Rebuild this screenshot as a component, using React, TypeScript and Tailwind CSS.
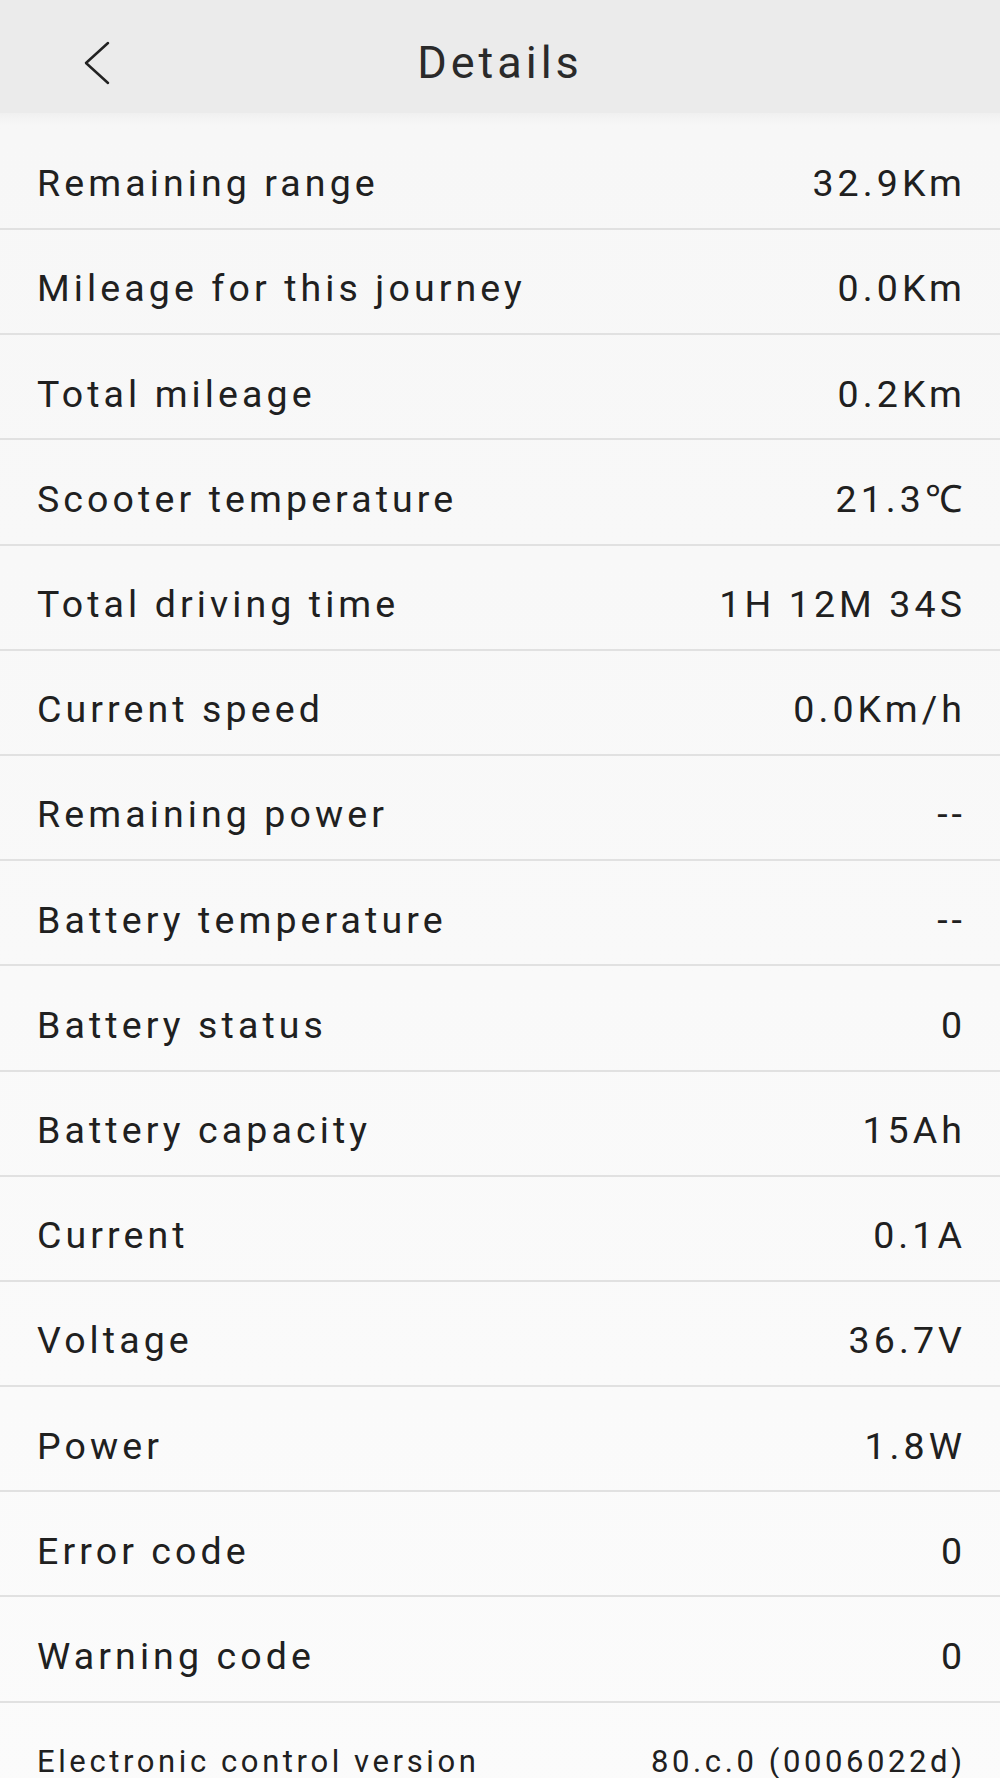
import React from 'react'

const rows: { label: string; value: string }[] = [
  { label: 'Remaining range', value: '32.9Km' },
  { label: 'Mileage for this journey', value: '0.0Km' },
  { label: 'Total mileage', value: '0.2Km' },
  { label: 'Scooter temperature', value: '21.3℃' },
  { label: 'Total driving time', value: '1H 12M 34S' },
  { label: 'Current speed', value: '0.0Km/h' },
  { label: 'Remaining power', value: '--' },
  { label: 'Battery temperature', value: '--' },
  { label: 'Battery status', value: '0' },
  { label: 'Battery capacity', value: '15Ah' },
  { label: 'Current', value: '0.1A' },
  { label: 'Voltage', value: '36.7V' },
  { label: 'Power', value: '1.8W' },
  { label: 'Error code', value: '0' },
  { label: 'Warning code', value: '0' },
]

export default function App() {
  return (
    <div className="w-[1000px] h-[1778px] overflow-hidden bg-[#f8f8f8] text-[#202020] font-['Roboto','Liberation_Sans',sans-serif]">
      {/* top bar */}
      <div className="h-[113px] bg-[#ebebeb] pt-[13px] grid grid-cols-[1fr_auto_1fr] items-center">
        <div className="pl-[84px] flex items-center">
          <svg width="26" height="44" viewBox="0 0 26 44" fill="none">
            <polyline points="24,2 2,22 24,42" stroke="#222" strokeWidth="2.5" strokeLinecap="round" strokeLinejoin="round" />
          </svg>
        </div>
        <h1 className="text-[45px] tracking-[4px] text-[#2a2a2a] font-normal">Details</h1>
        <div />
      </div>
      <div className="h-[12px] bg-gradient-to-b from-[#f0f0f0] to-[#f7f7f7]" />

      <div className="bg-gradient-to-b from-[#f7f7f7] to-[#fbfbfb]">
        {rows.map((r, i) => (
          <div
            key={r.label}
            className={
              'flex items-center justify-between pl-[37px] pr-[38px] pt-[14px] border-b-2 border-[#e1e1e1] text-[37.5px] tracking-[4.1px] ' +
              (i === 0 ? 'h-[105px]' : 'h-[105.2px]')
            }
          >
            <span>{r.label}</span>
            <span className="-mr-[4.1px]">{r.value}</span>
          </div>
        ))}
        <div className="flex items-center justify-between pl-[37px] pr-[38px] pt-[14px] h-[105px] text-[31px] tracking-[3.6px]">
          <span>Electronic control version</span>
          <span className="-mr-[3.6px]">80.c.0 (0006022d)</span>
        </div>
      </div>
    </div>
  )
}
